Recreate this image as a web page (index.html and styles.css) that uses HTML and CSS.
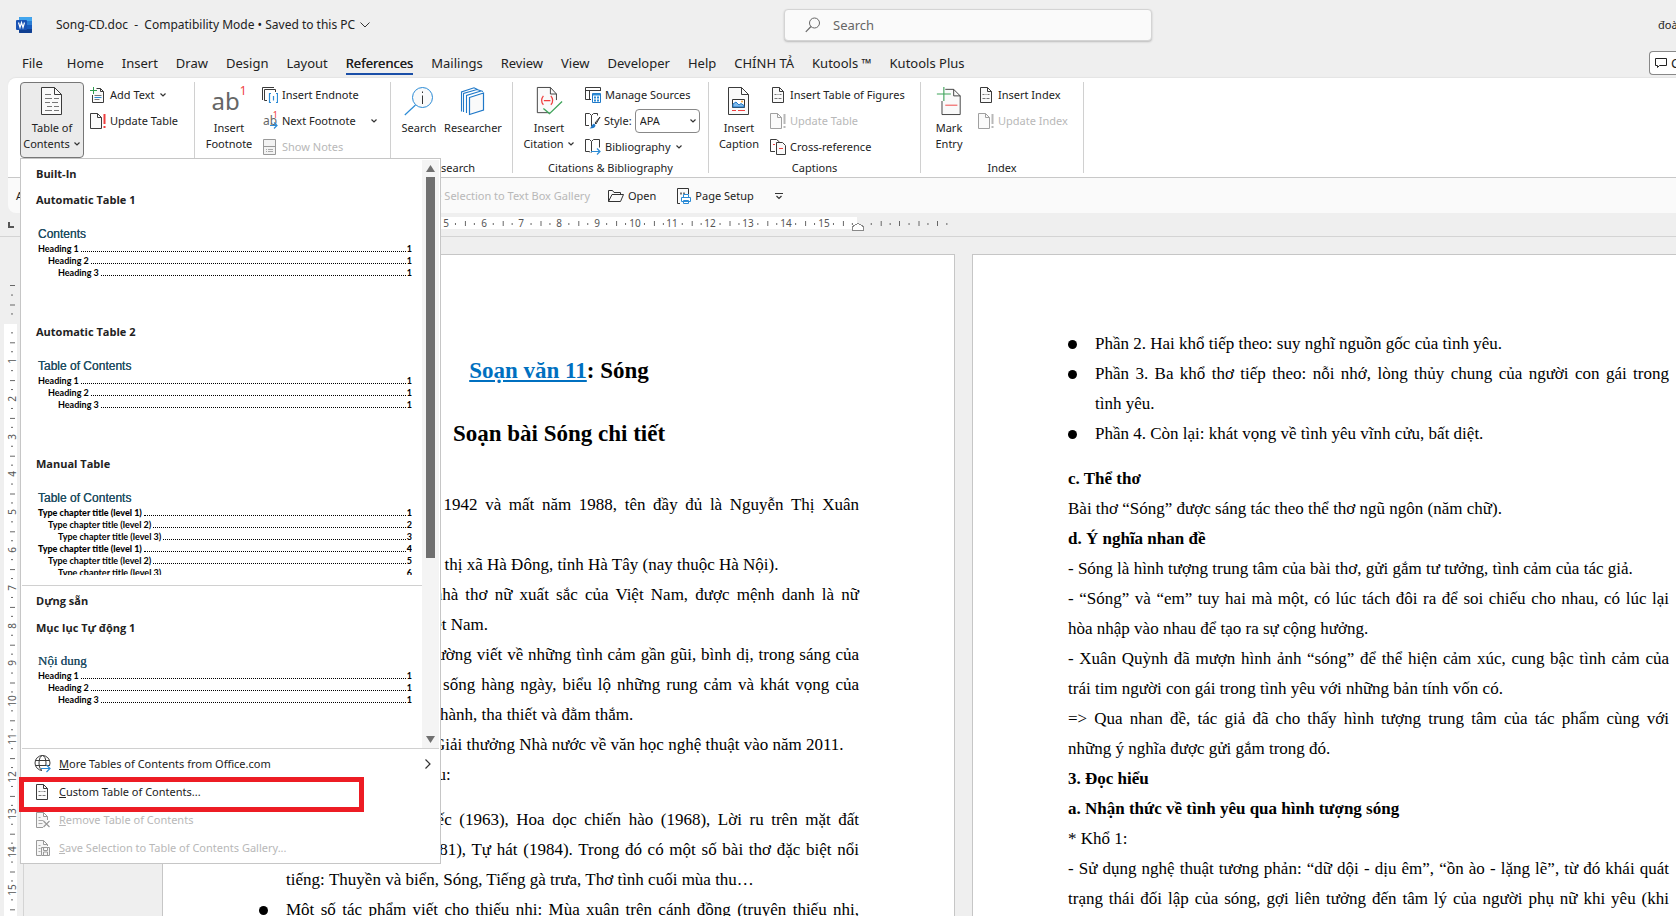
FILE: index.html
```html
<!DOCTYPE html>
<html lang="vi">
<head>
<meta charset="utf-8">
<title>Song-CD.doc - Word</title>
<link rel="stylesheet" href="styles.css">
</head>
<body>
<svg class="defs" width="0" height="0" aria-hidden="true">
  <symbol id="chev" viewBox="0 0 8 8"><path d="M1.500 2.500 4 5 6.500 2.500" fill="none" stroke="#333" stroke-width="1.200"/></symbol>
  <symbol id="doc-lines" viewBox="0 0 16 16"><path d="M2.500.5h7l4 4v11h-11z" fill="#fafafa" stroke="#3b3b3b"/><path d="M9.500.5v4h4" fill="none" stroke="#3b3b3b"/><path d="M4.500 7.500h2m1 0h1m1 0h2M4.500 11.500h3m1 0h3" stroke="#777" fill="none"/></symbol>
  <symbol id="doc-update" viewBox="0 0 16 16"><path d="M.5.5h7l4 4v11H.5z" fill="#fafafa" stroke="var(--ink)"/><path d="M7.500.5v4h4" fill="none" stroke="var(--ink)"/><path d="M14.500 1v10m0 2v2" stroke="var(--mark)" stroke-width="2"/></symbol>
</svg>
<div class="app">
  <header class="titlebar">
    <div class="title-left">
      <svg class="word-logo" viewBox="0 0 16 16" width="16" height="16"><rect x="3" width="13" height="16" rx="1" fill="#185abd"/><path d="M3 1q0-1 1-1h11q1 0 1 1v3H3z" fill="#41a5ee"/><path d="M3 4h13v4H3z" fill="#2b7cd3"/><path d="M3 12h13v3q0 1-1 1H4q-1 0-1-1z" fill="#103f91"/><rect y="3" width="11" height="10" rx="1" fill="#1a53b4"/><path d="M2.500 5.500 4 10.500 5.500 5.500 7 10.500 8.500 5.500" fill="none" stroke="#fff" stroke-width="1.200"/></svg>
      <h1 class="filename">Song-CD.doc&nbsp; -&nbsp; Compatibility Mode • Saved to this PC</h1>
      <svg width="12" height="8" viewBox="0 0 12 8"><path d="M1.500 1.500 6 6l4.500-4.500" fill="none" stroke="#333"/></svg>
    </div>
    <label class="search">
      <svg width="16" height="16" viewBox="0 0 16 16"><circle cx="9.500" cy="6" r="5" fill="none" stroke="#666"/><path d="M6 9.500.8 14.800" stroke="#666" stroke-width="1.200"/></svg>
      <input type="text" placeholder="Search" aria-label="Search">
    </label>
    <span class="user">đoàn</span>
  </header>
  <nav class="tabs">
    <button>File</button><button>Home</button><button>Insert</button><button>Draw</button><button>Design</button><button>Layout</button><button class="active">References</button><button>Mailings</button><button>Review</button><button>View</button><button>Developer</button><button>Help</button><button>CHÍNH TẢ</button><button>Kutools ™</button><button>Kutools Plus</button>
    <button class="comments"><svg width="12" height="12" viewBox="0 0 12 12"><path d="M.5 1.500h11v7h-7l-2 2v-2h-2z" fill="none" stroke="#222"/></svg>Comments</button>
  </nav>
  <section class="ribbon">
    <div class="group g-toc">
      <div class="tools">
        <button class="big open">
          <svg width="22" height="28" viewBox="0 0 22 28"><path d="M.5.5h13l7 7v20H.5z" fill="#fafafa" stroke="#3b3b3b"/><path d="M13.500.5v7h7" fill="none" stroke="#3b3b3b"/><path d="M4 7.500h6M4 11.500h7m2 0h5M4 15.500h5m2 0h6M6 19.500h5m2 0h5M4 23.500h7m2 0h5" stroke="#777" fill="none"/></svg>
          <span>Table of</span><span>Contents<svg class="ch"><use href="#chev"/></svg></span>
        </button>
        <div class="col">
          <button><svg width="16" height="16" viewBox="0 0 16 16"><path d="M6.500 1.500h4l3 3v11h-11V8" fill="#fafafa" stroke="#3b3b3b"/><path d="M10.500 1.500v3h3" fill="none" stroke="#3b3b3b"/><path d="M3.500 0v7M0 3.500h7" stroke="#2f9e4f"/><path d="M4.500 8.500h7m-7 4h5" stroke="#777"/><path d="M4.500 10.500h7" stroke="#2b8bd6"/></svg>Add Text<svg class="ch"><use href="#chev"/></svg></button>
          <button><svg class="i16"><use href="#doc-update"/></svg>Update Table</button>
        </div>
      </div>
      <div class="glabel">Table of Contents</div>
    </div>
    <div class="group g-foot">
      <div class="tools">
        <button class="big"><span class="ab-big">ab<sup>1</sup></span><span>Insert</span><span>Footnote</span></button>
        <div class="col">
          <button><svg width="16" height="16" viewBox="0 0 16 16"><path d="M5 13.500H2.500V2.500h11V5" fill="none" stroke="#3b3b3b"/><path d="M.5 13V.5H12" fill="none" stroke="#3b3b3b"/><path d="M9 6.500H7.500v9H9m5-9h1.500v9H14M11.500 9v4.500" fill="none" stroke="#2b8bd6" stroke-width="1.200"/></svg>Insert Endnote</button>
          <button class="wide"><span class="ab-small">ab<sup>1</sup><svg width="8" height="7" viewBox="0 0 8 7"><path d="M0 3.500h7M4 .5l3 3-3 3" fill="none" stroke="#2b8bd6" stroke-width="1.200"/></svg></span>Next Footnote<svg class="ch"><use href="#chev"/></svg></button>
          <button class="off" disabled><svg width="16" height="16" viewBox="0 0 16 16"><path d="M1.500.5h12v15h-12zM1.500 7.500h12" fill="#f3f3f3" stroke="#999"/><path d="M4 10.500h1m1 0h5m-7 2h1m1 0h5" stroke="#aaa"/></svg>Show Notes</button>
        </div>
      </div>
      <div class="glabel">Footnotes</div>
    </div>
    <div class="group g-research">
      <div class="tools">
        <button class="big w40"><svg width="30" height="28" viewBox="0 0 30 28"><circle cx="18.500" cy="10.500" r="10" fill="#fafafa" stroke="#2b8bd6"/><path d="M11.500 18 .8 28" stroke="#2b8bd6" stroke-width="1.200"/><path d="M18.500 8.500V17M18.500 4.500V6" stroke="#333"/></svg><span>Search</span></button>
        <button class="big w60"><svg width="24" height="28" viewBox="0 0 24 28"><path d="M.5 24.500V5L13 .8l3.500 1.700M2.500 25V6.500L16 2.500l6 2M5.500 26V8.500L20 4" fill="none" stroke="#1f78c8" stroke-width="1.100"/><path d="M8.500 10.500 22.500 6v17l-14 4.500z" fill="#fafafa" stroke="#1f78c8" stroke-width="1.200"/></svg><span>Researcher</span></button>
      </div>
      <div class="glabel">Research</div>
    </div>
    <div class="group g-cite">
      <div class="tools">
        <button class="big"><svg width="28" height="30" viewBox="0 0 28 30"><path d="M22 14V7.500L15.500.5H1.500v27h13" fill="#fafafa" stroke="#3b3b3b"/><path d="M15.500.5v7h6.500" fill="none" stroke="#3b3b3b"/><path d="M8 9.500q-4 5 0 9.500m8-9.500q4 5 0 9.500M8.500 14.500h7" fill="none" stroke="#ef3e3e" stroke-width="1.300"/><path d="M8 23l6.500 5.500L28 15.500" fill="none" stroke="#3fa45b" stroke-width="1.400"/></svg><span>Insert</span><span>Citation<svg class="ch"><use href="#chev"/></svg></span></button>
        <div class="col">
          <button><svg width="16" height="16" viewBox="0 0 16 16"><path d="M6 12.500H.5v-12h15V4M.5 3.500h15M4.500 3.500v9" fill="none" stroke="#3b3b3b"/><path d="M7.500 6.500h8v9h-8z" fill="#fff" stroke="#1f78c8"/><path d="M8 7.500h7M9 10.500h2m1 0h2M9 13.500h2m1 0h2" stroke="#2b8bd6" stroke-width="2"/></svg>Manage Sources</button>
          <div class="style-row"><svg width="16" height="16" viewBox="0 0 16 16"><path d="M4 12.500H.5V.5h4l2 2 2-2h4v2M6.500 2.500v11" fill="none" stroke="#3b3b3b"/><path d="m15 4-5 6 1 1z" fill="#fff" stroke="#333"/><path d="M4.500 15.500q2-1 2.500-3.500l2-1.500 1.500 1.500q0 3.500-6 3.500z" fill="#1f78c8"/></svg><label for="cite-style">Style:</label><span class="select"><select id="cite-style"><option>APA</option></select><svg class="ch"><use href="#chev"/></svg></span></div>
          <button><svg width="16" height="16" viewBox="0 0 16 16"><path d="M5 13.500 4.500 12.500H.5V.5h4l2 2 2-2h6v8M6.500 2.500v11" fill="none" stroke="#3b3b3b"/><path d="M6 12.500h9m-3-3 3 3-3 3" fill="none" stroke="#2b8bd6" stroke-width="1.200"/></svg>Bibliography<svg class="ch"><use href="#chev"/></svg></button>
        </div>
      </div>
      <div class="glabel">Citations &amp; Bibliography</div>
    </div>
    <div class="group g-cap">
      <div class="tools">
        <button class="big"><svg width="22" height="28" viewBox="0 0 22 28"><path d="M.5.5h13l7 7v20H.5z" fill="#fafafa" stroke="#3b3b3b"/><path d="M13.500.5v7h7" fill="none" stroke="#3b3b3b"/><path d="M4.500 12.500h12v8h-12z" fill="#fff" stroke="#333"/><path d="M5 20v-3l3-2 3 3 2-1.500 3 2V20z" fill="#7fb9ea" stroke="#1f78c8"/><circle cx="14" cy="14.500" r="1" fill="#f2a33a"/><path d="M4 23.500h4m2 0h7" stroke="#ef3e3e"/></svg><span>Insert</span><span>Caption</span></button>
        <div class="col">
          <button><svg class="i16"><use href="#doc-lines"/></svg>Insert Table of Figures</button>
          <button class="off" disabled><svg class="i16"><use href="#doc-update"/></svg>Update Table</button>
          <button><svg width="16" height="16" viewBox="0 0 16 16"><path d="M5 12.500H.5V.5h6l3 2.500M3 5.500h2" fill="none" stroke="#3b3b3b"/><path d="M6.500 3.500h6l3 3v9h-9z" fill="#fafafa" stroke="#3b3b3b"/><path d="M9 9.500h4M3 5.500h2" stroke="#ef3e3e"/></svg>Cross-reference</button>
        </div>
      </div>
      <div class="glabel">Captions</div>
    </div>
    <div class="group g-index">
      <div class="tools">
        <button class="big"><svg width="26" height="30" viewBox="0 0 26 30"><path d="M9 2.500h9l7 7v20H5.500V15" fill="#fafafa" stroke="#3b3b3b"/><path d="M18 2.500v7h7" fill="none" stroke="#3b3b3b"/><path d="M7.500 0v15M0 7.500h15" stroke="#3fa45b" stroke-width="1.200"/><path d="M9 19.500h13" stroke="#ef3e3e"/></svg><span>Mark</span><span>Entry</span></button>
        <div class="col">
          <button><svg class="i16"><use href="#doc-lines"/></svg>Insert Index</button>
          <button class="off" disabled><svg class="i16"><use href="#doc-update"/></svg>Update Index</button>
        </div>
      </div>
      <div class="glabel">Index</div>
    </div>
  </section>
  <div class="quick">
    <div class="quick-left"><span>AutoText</span><span class="off">Save Selection to Text Box Gallery</span></div>
    <button><svg width="16" height="14" viewBox="0 0 16 14"><path d="M.5 12.500v-11h4l1.500 2h6.500v2M.5 12.500 4 5.500h11.500l-3 7z" fill="none" stroke="#333"/></svg>Open</button>
    <button><svg width="14" height="16" viewBox="0 0 14 16"><path d="M3 15.500H.5V.5h11V6" fill="none" stroke="#333"/><path d="M3 5.500h2m1 0h2" stroke="#777" stroke-width="2"/><path d="M6.500 9V6.500h5V9M4.500 9.500h9v4h-9zM6.500 12.500h5v3h-5z" fill="#fff" stroke="#2b8bd6"/></svg>Page Setup</button>
    <button aria-label="Customize"><svg width="8" height="8" viewBox="0 0 8 8"><path d="M0 1.500h8M1.500 4 4 6.500 6.500 4" fill="none" stroke="#333" stroke-width="1.200"/></svg></button>
  </div>
  <div class="hruler">
    <svg width="960" height="22" viewBox="0 0 960 22">
      <defs><pattern id="ht" x="257" y="0" width="37.800" height="22" patternUnits="userSpaceOnUse"><path d="M9 10h1v2h-1zM28 10h1v2h-1zM18.500 8h1v5h-1z" fill="#666"/></pattern></defs>
      <path d="M8.500 9v5H14" fill="none" stroke="#555" stroke-width="2"/>
      <rect x="258" y="4" width="599" height="12" fill="#fff"/><rect x="258" y="0" width="692" height="22" fill="url(#ht)"/>
      <path d="M899.500 8v5M937.500 8v5" stroke="#666"/>
      <g class="rn"><text x="295" y="14">1</text><text x="333" y="14">2</text><text x="371" y="14">3</text><text x="408" y="14">4</text><text x="446" y="14">5</text><text x="484" y="14">6</text><text x="521" y="14">7</text><text x="559" y="14">8</text><text x="597" y="14">9</text><text x="635" y="14">10</text><text x="672" y="14">11</text><text x="710" y="14">12</text><text x="748" y="14">13</text><text x="786" y="14">14</text><text x="824" y="14">15</text></g>
      <path d="M852.500 17.500v-4l5.500-3 5.500 3v4z" fill="#fff" stroke="#888"/>
    </svg>
  </div>
  <main class="workspace">
    <div class="vruler">
      <svg width="20" height="680" viewBox="0 0 20 680">
        <defs><pattern id="vt" x="0" y="86.400" width="20" height="37.800" patternUnits="userSpaceOnUse"><path d="M11 9h2v1h-2zM11 28h2v1h-2zM10 18.500h5v1h-5z" fill="#666"/></pattern></defs>
        <rect x="4" y="87" width="13" height="593" fill="#fff"/><rect x="0" y="50" width="20" height="630" fill="url(#vt)"/>
        <path d="M10 48.500h5" stroke="#666"/>
        <g class="rn"><text transform="translate(16 124)rotate(-90)">1</text><text transform="translate(16 162)rotate(-90)">2</text><text transform="translate(16 200)rotate(-90)">3</text><text transform="translate(16 237)rotate(-90)">4</text><text transform="translate(16 275)rotate(-90)">5</text><text transform="translate(16 313)rotate(-90)">6</text><text transform="translate(16 351)rotate(-90)">7</text><text transform="translate(16 389)rotate(-90)">8</text><text transform="translate(16 426)rotate(-90)">9</text><text transform="translate(16 464)rotate(-90)">10</text><text transform="translate(16 502)rotate(-90)">11</text><text transform="translate(16 540)rotate(-90)">12</text><text transform="translate(16 577)rotate(-90)">13</text><text transform="translate(16 615)rotate(-90)">14</text><text transform="translate(16 653)rotate(-90)">15</text></g>
      </svg>
    </div>
    <div class="pages">
      <article class="page first">
        <h2><a href="#">Soạn văn 11</a>: Sóng</h2>
        <h2>Soạn bài Sóng chi tiết</h2>
        <p>- Xuân Quỳnh sinh năm 1942 và mất năm 1988, tên đầy đủ là Nguyễn Thị Xuân Quỳnh,&nbsp;nhà&nbsp;thơ.</p>
        <p>- Quê quán ở làng La Khê, thị xã Hà Đông, tỉnh Hà Tây (nay thuộc Hà Nội).</p>
        <p>- Xuân Quỳnh chính là nhà thơ nữ xuất sắc của Việt Nam, được mệnh danh là nữ hoàng&nbsp;thơ tình yêu của Việt Nam.</p>
        <p>- Thơ của Xuân Quỳnh thường viết về những tình cảm gần gũi, bình dị, trong sáng của tuổi&nbsp;trẻ, gia đình và cuộc sống hàng ngày, biểu lộ những rung cảm và khát vọng của trái&nbsp;tim phụ nữ luôn chân thành, tha thiết và đằm thắm.</p>
        <p>- Bà cũng được truy tặng Giải thưởng Nhà nước về văn học nghệ thuật vào năm 2011.</p>
        <p>- Một số tác phẩm tiêu biểu:</p>
        <ul>
          <li>Các tập thơ: Chồi biếc (1963), Hoa dọc chiến hào (1968), Lời ru trên mặt đất (1978),&nbsp;Chờ trăng (1981), Tự hát (1984). Trong đó có một số bài thơ đặc biệt nổi tiếng:&nbsp;Thuyền và biển, Sóng, Tiếng gà trưa, Thơ tình cuối mùa thu…</li>
          <li>Một số tác phẩm viết cho thiếu nhi: Mùa xuân trên cánh đồng (truyện thiếu nhi, 1981), Bầu trời trong quả trứng (1982).</li>
        </ul>
      </article>
      <article class="page second">
        <ul>
          <li>Phần 2. Hai khổ tiếp theo: suy nghĩ nguồn gốc của tình yêu.</li>
          <li>Phần 3. Ba khổ thơ tiếp theo: nỗi nhớ, lòng thủy chung của người con gái trong tình&nbsp;yêu.</li>
          <li>Phần 4. Còn lại: khát vọng về tình yêu vĩnh cửu, bất diệt.</li>
        </ul>
        <h3>c. Thể thơ</h3>
        <p>Bài thơ “Sóng” được sáng tác theo thể thơ ngũ ngôn (năm chữ).</p>
        <h3>d. Ý nghĩa nhan đề</h3>
        <p>- Sóng là hình tượng trung tâm của bài thơ, gửi gắm tư tưởng, tình cảm của tác giả.</p>
        <p>- “Sóng” và “em” tuy hai mà một, có lúc tách đôi ra để soi chiếu cho nhau, có lúc lại hòa&nbsp;nhập vào nhau để tạo ra sự cộng hưởng.</p>
        <p>- Xuân Quỳnh đã mượn hình ảnh “sóng” để thể hiện cảm xúc, cung bậc tình cảm của trái&nbsp;tim người con gái trong tình yêu với những bản tính vốn có.</p>
        <p>=&gt; Qua nhan đề, tác giả đã cho thấy hình tượng trung tâm của tác phẩm cùng với những&nbsp;ý nghĩa được gửi gắm trong đó.</p>
        <h3>3. Đọc hiểu</h3>
        <h3>a. Nhận thức về tình yêu qua hình tượng sóng</h3>
        <p>* Khổ 1:</p>
        <p>- Sử dụng nghệ thuật tương phản: “dữ dội - dịu êm”, “ồn ào - lặng lẽ”, từ đó khái quát trạng&nbsp;thái đối lập của sóng, gợi liên tưởng đến tâm lý của người phụ nữ khi yêu (khi thì&nbsp;sôi&nbsp;nổi, khi thì dịu dàng).</p>
      </article>
    </div>
  </main>

  <div class="menu">
    <div class="gallery">
      <div class="gallery-list">
        <h4>Built-In</h4>
        <button class="item"><b>Automatic Table 1</b><span class="thumb"><em>Contents</em><i><span>Heading 1</span><u></u>1</i><i class="l2"><span>Heading 2</span><u></u>1</i><i class="l3"><span>Heading 3</span><u></u>1</i></span></button>
        <button class="item"><b>Automatic Table 2</b><span class="thumb"><em>Table of Contents</em><i><span>Heading 1</span><u></u>1</i><i class="l2"><span>Heading 2</span><u></u>1</i><i class="l3"><span>Heading 3</span><u></u>1</i></span></button>
        <button class="item"><b>Manual Table</b><span class="thumb"><em>Table of Contents</em><i class="strong"><span>Type chapter title (level 1)</span><u></u>1</i><i class="l2"><span>Type chapter title (level 2)</span><u></u>2</i><i class="l3"><span>Type chapter title (level 3)</span><u></u>3</i><i class="strong"><span>Type chapter title (level 1)</span><u></u>4</i><i class="l2"><span>Type chapter title (level 2)</span><u></u>5</i><i class="l3"><span>Type chapter title (level 3)</span><u></u>6</i></span></button>
        <h4 class="ruled">Dựng sẵn</h4>
        <button class="item last"><b>Mục lục Tự động 1</b><span class="thumb"><em class="serif">Nội dung</em><i><span>Heading 1</span><u></u>1</i><i class="l2"><span>Heading 2</span><u></u>1</i><i class="l3"><span>Heading 3</span><u></u>1</i></span></button>
      </div>
      <div class="scroll">
        <svg width="9" height="7" viewBox="0 0 9 7"><path d="M4.500 0 9 7H0z" fill="#707070"/></svg>
        <div class="thumb-bar"></div>
        <svg width="9" height="7" viewBox="0 0 9 7"><path d="M4.500 7 9 0H0z" fill="#707070"/></svg>
      </div>
    </div>
    <div class="commands">
      <button><svg width="18" height="18" viewBox="0 0 18 18"><circle cx="8.500" cy="8" r="7.500" fill="none" stroke="#3b3b3b"/><ellipse cx="8.500" cy="8" rx="3.500" ry="7.500" fill="none" stroke="#3b3b3b"/><path d="M1.500 5.500h14M1.500 10.500h14" stroke="#3b3b3b"/><path d="M8 11h10v6H8z" fill="#fff"/><path d="M7 13.500h9m-3.500-3.500 3.500 3.500-3.500 3.500" fill="none" stroke="#2b8bd6" stroke-width="1.200"/></svg><span><ins>M</ins>ore Tables of Contents from Office.com</span><svg class="arrow" width="8" height="10" viewBox="0 0 8 10"><path d="M1.500.5 6 5 1.500 9.500" fill="none" stroke="#333" stroke-width="1.200"/></svg></button>
      <button><svg width="18" height="16" viewBox="0 0 18 16"><use href="#doc-lines" width="16" height="16"/></svg><span><ins>C</ins>ustom Table of Contents...</span></button>
      <button class="off" disabled><svg width="18" height="16" viewBox="-1 0 18 16"><path d="M8 15.500H1.500V.5h7l4 4V8M8.500.5v4h4" fill="#f6f6f6" stroke="#999"/><path d="M3.500 5.500h2m-2 3h5m-5 3h4" stroke="#aaa"/><path d="m8.500 9 6 6m0-6-6 6" stroke="#999" stroke-width="1.200"/></svg><span><ins>R</ins>emove Table of Contents</span></button>
      <button class="off" disabled><svg width="18" height="16" viewBox="-1 0 18 16"><path d="M6 15.500H1.500V.5h7l4 4V6M8.500.5v4h4" fill="#f6f6f6" stroke="#999"/><path d="M3.500 5.500h2m-2 3h2m-2 3h2" stroke="#aaa"/><path d="M6.500 7.500h8v8h-8zM8.500 7.500v3h4v-3M8.500 15v-3h4v3" fill="#f6f6f6" stroke="#999"/></svg><span><ins>S</ins>ave Selection to Table of Contents Gallery...</span></button>
    </div>
    <div class="highlight"></div>
  </div>
</div>
</body>
</html>
```
FILE: styles.css
```css
* { box-sizing: border-box; }
body { margin: 0; background: #efefef; color: #222; font: 12px/16px "Noto Sans", "Open Sans", sans-serif; }
button { border: 0; padding: 0; margin: 0; background: none; color: inherit; font: inherit; white-space: nowrap; }
h1, h2, h3, h4, p, ul { margin: 0; padding: 0; }
svg { flex: none; }
.defs { position: absolute; }
.app { position: relative; display: flex; flex-direction: column; height: 100vh; overflow: hidden; }

.titlebar { display: flex; align-items: center; height: 46px; padding-top: 3px; flex: none; }
.title-left { display: flex; align-items: center; width: 784px; padding-left: 16px; gap: 4px; }
.word-logo { margin-right: 20px; }
.filename { font-size: 12px; font-weight: 400; }
.search { display: flex; align-items: center; gap: 10px; width: 368px; height: 32px; padding-left: 20px; background: #fafafa; border: 1px solid #d4d4d4; border-radius: 4px; box-shadow: 0 1px 2px #bbb; }
.search input { flex: 1; border: 0; outline: 0; background: none; font: inherit; font-size: 13px; }
.search input::placeholder { color: #666; opacity: 1; }
.user { width: 18px; margin-left: auto; overflow: hidden; font-size: 11px; }

.tabs { display: flex; align-items: flex-start; gap: 18px; height: 32px; padding: 5px 0 0 22px; flex: none; overflow: hidden; font-size: 13px; }
.tabs button { height: 24px; line-height: 24px; }
.tabs button:first-child { margin-right: 6px; }
.tabs .active { border-bottom: 2px solid #1a4fa8; text-shadow: 0 0 #222; }
.tabs .comments { display: flex; align-items: center; gap: 4px; width: 27px; margin-left: auto; padding-left: 5px; overflow: hidden; border: 1px solid #888; border-right: 0; border-radius: 4px 0 0 4px; background: #fff; }

.ribbon { display: flex; height: 100px; margin-left: 8px; padding: 4px 0 0 12px; flex: none; background: #fff; border-bottom: 1px solid #c8c8c8; border-radius: 8px 0 0 0; box-shadow: 0 -1px 1px #e4e4e4; font-size: 11px; }
.group { display: flex; flex-direction: column; height: 91px; border-right: 1px solid #d0d0d0; }
.tools { display: flex; gap: 6px; height: 78px; flex: none; }
.glabel { text-align: center; line-height: 16px; }
.g-toc { width: 175px; }
.g-foot { width: 196px; }
.g-foot .tools { padding-left: 7px; }
.g-research { width: 122px; }
.g-research .tools { padding-left: 8px; gap: 4px; }
.g-cite { width: 196px; }
.g-cite .tools { padding-left: 6px; }
.g-cap { width: 212px; }
.g-cap .tools { padding-left: 5px; }
.g-index { width: 163px; }
.g-index .tools { padding-left: 5px; }
.big { display: flex; flex-direction: column; align-items: center; width: 54px; height: 76px; padding-top: 5px; line-height: 16px; }
.big > svg { height: 28px; margin-bottom: 5px; overflow: visible; }
.big.open { width: 64px; background: #ebebeb; border: 1px solid #777; border-radius: 4px; padding-top: 4px; }
.g-cite .big { width: 60px; }
.g-cap .big { width: 50px; }
.g-index .big { width: 46px; }
.big.w40 { width: 40px; }
.big.w60 { width: 60px; }
.ch { width: 8px; height: 8px; margin-left: 3px; }
.i16 { width: 16px; height: 16px; --ink: #3b3b3b; --mark: #ef3e3e; }
.col { display: flex; flex-direction: column; flex: 1; }
.col button { display: flex; align-items: center; gap: 4px; height: 26px; }
.col .ch { margin-left: 0; }
.col .wide .ch { margin-left: 10px; }
.off { color: #b8b8b8; }
.off .i16 { --ink: #a0a0a0; --mark: #b8b8b8; }
.ab-big { height: 28px; margin-bottom: 5px; font-size: 24px; line-height: 28px; color: #666; }
.ab-big sup, .ab-small sup { color: #ef3e3e; font-size: 12px; line-height: 0; vertical-align: 15px; }
.ab-small { position: relative; width: 16px; color: #666; font-size: 12px; }
.ab-small sup { position: absolute; right: 0; top: 2px; font-size: 9px; }
.ab-small svg { position: absolute; right: 0; bottom: 0; }
.style-row { display: flex; align-items: center; gap: 3px; height: 26px; }
.select { position: relative; }
.select select { display: block; width: 65px; height: 24px; padding: 0 0 0 4px; appearance: none; border: 1px solid #888; border-radius: 4px; background: #fff; color: #222; font: inherit; }
.select .ch { position: absolute; right: 3px; top: 8px; pointer-events: none; }

.quick { display: flex; align-items: center; height: 35px; margin-left: 8px; flex: none; background: #fafafa; border-radius: 0 0 0 8px; font-size: 11px; }
.quick-left { display: flex; justify-content: space-between; width: 582px; padding-left: 8px; margin-right: 18px; }
.quick button { display: flex; align-items: center; gap: 4px; margin-right: 21px; }

.hruler { height: 24px; flex: none; border-bottom: 1px solid #d4d4d4; }
.hruler svg, .vruler svg { display: block; shape-rendering: crispEdges; }
.rn { fill: #555; font-size: 10px; text-anchor: middle; }

.workspace { display: flex; flex: 1; min-height: 0; overflow: hidden; }
.vruler { width: 24px; flex: none; border-right: 1px solid #d4d4d4; }
.pages { display: flex; flex: none; gap: 17px; padding: 17px 0 0 138px; }
.page { width: 793px; height: 1122px; flex: none; padding: 100px 95px 0 96px; background: #fff; border: 1px solid #c6c6c6; color: #000; font: 17px/30px "Liberation Serif", serif; text-align: justify; }
.page.second { padding-top: 74px; padding-left: 95px; }
.page h2 { margin-bottom: 31px; font-size: 23px; line-height: 32px; text-align: center; }
.page h2 + p { padding-top: 9px; }
.page h2 a { color: #0070c0; }
.page h3 { font-size: 17px; line-height: 30px; }
.page ul { margin: 15px 0; padding-left: 27px; list-style: none; }
.page.second ul { margin-top: 0; }
.page li::before { content: ""; float: left; width: 9px; height: 9px; margin: 11px 0 0 -27px; border-radius: 50%; background: #000; }

.menu { position: absolute; left: 20px; top: 158px; width: 421px; background: #fff; border: 1px solid #c6c6c6; font-family: "Open Sans", sans-serif; }
.gallery { display: flex; height: 589px; margin: 1px 1px 0; border-bottom: 1px solid #d0d0d0; }
.gallery-list { flex: 1; overflow: hidden; color: #222; font-size: 11px; }
.gallery h4 { padding-left: 14px; font-size: 11px; line-height: 28px; }
.gallery h4.ruled { border-top: 1px solid #d0d0d0; line-height: 30px; }
.item { display: flex; flex-direction: column; width: 100%; height: 132px; padding: 0 10px 0 14px; text-align: left; line-height: 24px; }
.item:nth-of-type(3) { margin-bottom: 1px; }
.item.last { height: 120px; }
.item b { line-height: 24px; }
.thumb { display: flex; flex-direction: column; height: 86px; margin-top: 13px; padding-left: 2px; overflow: hidden; color: #000; font: 700 9px/12px Lato, "Open Sans", sans-serif; }
.item.last .thumb { margin-top: 12px; }
.thumb em { color: #1f4e63; font: 400 12px/18px "Liberation Sans", sans-serif; text-shadow: 0 0 #1f4e63; }
.thumb em.serif { font-family: "Liberation Serif", serif; font-size: 13px; }
.thumb i { display: flex; align-items: baseline; flex: none; font-style: normal; }
.thumb i.strong { font-weight: 900; }
.thumb .l2 { padding-left: 10px; }
.thumb .l3 { padding-left: 20px; }
.thumb u { flex: 1; margin: 0 1px 0 2px; border-bottom: 1px dotted #000; }
.scroll { display: flex; flex-direction: column; align-items: center; width: 17px; padding: 5px 0; background: #f4f4f4; }
.thumb-bar { width: 9px; height: 381px; margin: 5px 0 auto; background: #707070; }
.commands { display: flex; flex-direction: column; padding: 1px 0 1px 13px; font-family: "Noto Sans", "Open Sans", sans-serif; font-size: 11px; }
.commands button { display: flex; align-items: center; gap: 7px; height: 28px; }
.arrow { margin: 0 8px 0 auto; }
.highlight { position: absolute; left: -2px; top: 618px; width: 345px; height: 35px; border: 5px solid #ed1c24; }
```
